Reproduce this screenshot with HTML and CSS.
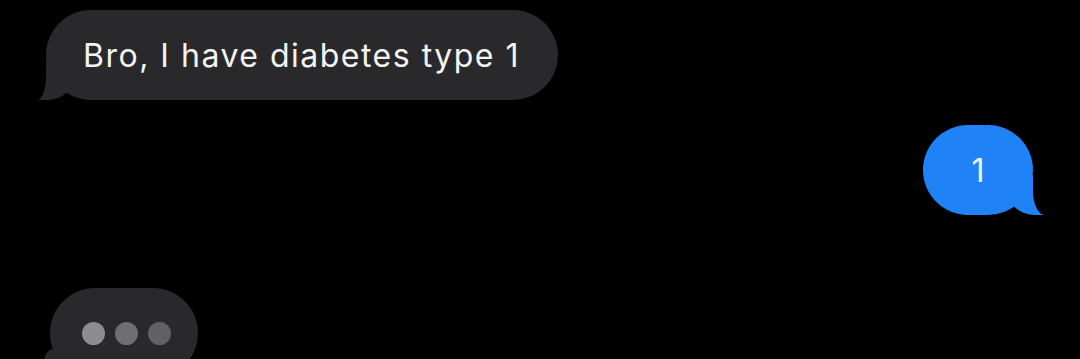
FILE: index.html
```html
<!DOCTYPE html>
<html>
<head>
<meta charset="utf-8">
<link rel="stylesheet" href="styles.css">
</head>
<body>
<div class="thread">
  <div class="row row-in">
    <div class="bubble bubble-in">Bro, I have diabetes type 1</div>
  </div>
  <div class="row row-out">
    <div class="bubble bubble-out">1</div>
  </div>
  <div class="row row-typing">
    <div class="typing">
      <span class="dot dot1"></span>
      <span class="dot dot2"></span>
      <span class="dot dot3"></span>
    </div>
  </div>
</div>
</body>
</html>
```
FILE: styles.css
```css
html, body {
  margin: 0;
  padding: 0;
  background: #000;
  overflow: hidden;
}
body {
  width: 1080px;
  height: 359px;
  font-family: Inter, "Liberation Sans", sans-serif;
}
.thread {
  display: flex;
  flex-direction: column;
  height: 359px;
  overflow: hidden;
  box-sizing: border-box;
  padding: 10px 47px 0 46px;
}
.row {
  display: flex;
  flex-shrink: 0;
}
.row-out {
  justify-content: flex-end;
  margin-top: 25px;
}
.row-typing {
  margin-top: 73px;
  padding-left: 4px;
}
.bubble {
  position: relative;
  height: 90px;
  border-radius: 45px;
  display: flex;
  align-items: center;
  color: #f4f4f4;
  font-size: 32px;
  box-sizing: border-box;
}
.bubble-in {
  background: #29292b;
  padding: 0 20px 0 37px;
  width: 512px;
  letter-spacing: 1.5px;
}
.bubble-in::before {
  content: "";
  position: absolute;
  left: -9px;
  bottom: 0;
  width: 40px;
  height: 40px;
  background: #29292b;
  border-bottom-right-radius: 30px;
}
.bubble-in::after {
  content: "";
  position: absolute;
  left: -20px;
  bottom: 0;
  width: 20px;
  height: 40px;
  background: #000;
  border-bottom-right-radius: 9px 24px;
}
.bubble-out {
  background: #1f83f7;
  width: 110px;
  justify-content: center;
}
.bubble-out::before {
  content: "";
  position: absolute;
  right: -12px;
  bottom: 0;
  width: 40px;
  height: 40px;
  background: #1f83f7;
  border-bottom-left-radius: 30px;
}
.bubble-out::after {
  content: "";
  position: absolute;
  right: -24px;
  bottom: 0;
  width: 24px;
  height: 40px;
  background: #000;
  border-bottom-left-radius: 12px 24px;
}
.typing {
  position: relative;
  width: 148px;
  height: 90px;
  border-radius: 45px;
  background: #29292b;
  display: flex;
  align-items: center;
  gap: 10px;
  padding-left: 32px;
  box-sizing: border-box;
}
.typing::before {
  content: "";
  position: absolute;
  left: -6px;
  bottom: 4px;
  width: 26px;
  height: 26px;
  border-radius: 50%;
  background: #29292b;
}
.dot {
  width: 23px;
  height: 23px;
  border-radius: 50%;
}
.dot1 { background: #8d8d90; }
.dot2 { background: #6f6f73; }
.dot3 { background: #616165; }
```
